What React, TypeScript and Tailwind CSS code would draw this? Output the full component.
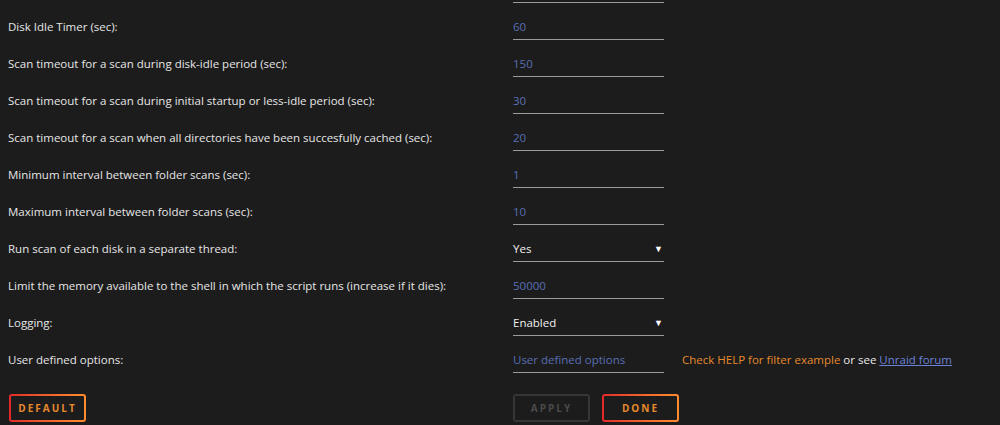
import { ReactNode } from "react";

type Row = {
  label: string;
  value: string;
  select?: boolean;
  help?: ReactNode;
};

const rows: Row[] = [
  { label: "Disk Idle Timer (sec):", value: "60" },
  { label: "Scan timeout for a scan during disk-idle period (sec):", value: "150" },
  { label: "Scan timeout for a scan during initial startup or less-idle period (sec):", value: "30" },
  { label: "Scan timeout for a scan when all directories have been succesfully cached (sec):", value: "20" },
  { label: "Minimum interval between folder scans (sec):", value: "1" },
  { label: "Maximum interval between folder scans (sec):", value: "10" },
  { label: "Run scan of each disk in a separate thread:", value: "Yes", select: true },
  { label: "Limit the memory available to the shell in which the script runs (increase if it dies):", value: "50000" },
  { label: "Logging:", value: "Enabled", select: true },
  {
    label: "User defined options:",
    value: "User defined options",
    help: (
      <>
        <span className="text-[#e68a2e]">Check HELP for filter example</span>
        <span className="text-[#e8e8e8]"> or see </span>
        <a className="text-[#6b82d6] underline">Unraid forum</a>
      </>
    ),
  },
];

const SettingRow = ({ row }: { row: Row }) => (
  <div className="flex items-end h-[37px]">
    <div className="w-[513px] pl-2 pb-[6px] leading-[14px] text-[#e6e6e6]">{row.label}</div>
    <div className="w-[151px] flex items-center justify-between border-b border-[#9a9a9a] pb-[5px] leading-[14px]">
      <span className={row.select ? "text-[#f0f0f0]" : "text-[#5a6fb5]"}>{row.value}</span>
      {row.select && <span className="text-[9px] text-white pr-[1px]">▼</span>}
    </div>
    {row.help && <div className="pl-[18px] pb-[6px] leading-[14px]">{row.help}</div>}
  </div>
);

const GradientButton = ({ children }: { children: ReactNode }) => (
  <div className="w-fit p-[2px] rounded-[3px] bg-gradient-to-r from-[#e22828] to-[#ff8c2f]">
    <div className="w-[73px] h-[24px] rounded-[1px] bg-[#1c1c1c] flex items-center justify-center text-[10px] font-bold tracking-[2px] text-[#e68a2e]">
      {children}
    </div>
  </div>
);

const App = () => {
  return (
    <div
      className="w-[1000px] h-[425px] bg-[#1c1c1c] text-[11.5px] overflow-hidden"
      style={{ fontFamily: '"Open Sans", "Noto Sans", sans-serif' }}
    >
      <div className="flex h-[3px]">
        <div className="w-[513px]" />
        <div className="w-[151px] border-b border-[#9a9a9a]" />
      </div>
      {rows.map((row) => (
        <SettingRow key={row.label} row={row} />
      ))}
      <div className="flex items-center mt-[21px]">
        <div className="w-[513px] pl-[9px]">
          <GradientButton>DEFAULT</GradientButton>
        </div>
        <div className="w-[77px] h-[28px] border-2 border-[#363636] rounded-[3px] flex items-center justify-center text-[10px] font-bold tracking-[2px] text-[#4a4a4a]">
          APPLY
        </div>
        <div className="ml-[12px]">
          <GradientButton>DONE</GradientButton>
        </div>
      </div>
    </div>
  );
};

export default App;
